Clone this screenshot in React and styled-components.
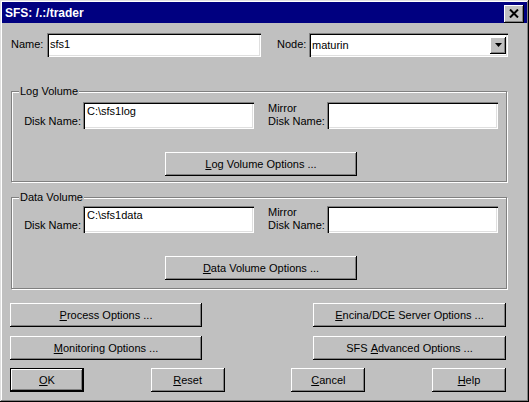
import styled, { createGlobalStyle } from "styled-components";

const GlobalStyle = createGlobalStyle`
  body {
    margin: 0;
    background: #c0c0c0;
    font-family: "Liberation Sans", Arial, sans-serif;
    font-size: 11px;
    color: #000;
  }
`;

const raised = `
  box-shadow: inset -1px -1px #000, inset 1px 1px #fff, inset -2px -2px #808080;
`;

const sunken = `
  box-shadow: inset 1px 1px #808080, inset 2px 2px #000, inset -1px -1px #fff, inset -2px -2px #dfdfdf;
`;

const Window = styled.div`
  width: 529px;
  height: 402px;
  box-sizing: border-box;
  padding: 2px;
  background: #c0c0c0;
  box-shadow: inset -1px -1px #000, inset 1px 1px #dfdfdf, inset -2px -2px #808080, inset 2px 2px #fff;
`;

const TitleBar = styled.div`
  height: 21px;
  background: #000080;
  color: #fff;
  display: flex;
  align-items: center;
  justify-content: space-between;
  padding: 0 3px 0 3px;
  font-size: 12px;
  font-weight: bold;
`;

const CloseButton = styled.div`
  width: 20px;
  height: 18px;
  background: #c0c0c0;
  ${raised}
  display: flex;
  align-items: center;
  justify-content: center;
  margin-top: 2px;
`;

const Body = styled.div`
  width: 498px;
  margin: 9px 0 0 8px;
`;

const TopRow = styled.div`
  display: grid;
  grid-template-columns: 37px 214px 16px 32px 199px;
  align-items: center;
`;

const Label = styled.span`
  padding-left: ${(p) => p.$indent || 0}px;
  line-height: 13px;
  white-space: nowrap;
`;

const Field = styled.div`
  height: ${(p) => p.$h || 24}px;
  background: #fff;
  ${sunken}
  box-sizing: border-box;
  padding: ${(p) => (p.$multi ? "3px 4px" : "0 3px")};
  display: flex;
  align-items: ${(p) => (p.$multi ? "flex-start" : "center")};
  line-height: 13px;
`;

const Select = styled(Field)`
  justify-content: space-between;
  padding-right: 2px;
  margin-top: 1px;
`;

const DropButton = styled.div`
  width: 16px;
  height: 17px;
  background: #c0c0c0;
  ${raised}
  display: flex;
  align-items: center;
  justify-content: center;
`;

const Group = styled.div`
  position: relative;
  margin: ${(p) => p.$mt}px 0 0 1px;
  width: 496px;
  box-sizing: border-box;
  border: 1px solid #808080;
  box-shadow: 1px 1px 0 #fff, inset 1px 1px 0 #fff;
  padding: ${(p) => p.$pt}px 0 ${(p) => p.$pb}px 0;
`;

const GroupTitle = styled.span`
  position: absolute;
  top: -7px;
  left: 7px;
  padding: 0 1px;
  background: #c0c0c0;
  line-height: 13px;
`;

const DiskRow = styled.div`
  display: grid;
  grid-template-columns: 70px 171px 14px 59px 171px;
  column-gap: 0;
  padding-left: 1px;
`;

const DiskLabel = styled.div`
  align-self: end;
  padding-bottom: 3px;
  padding-right: 2px;
  text-align: ${(p) => (p.$right ? "right" : "left")};
  line-height: 13px;
  white-space: nowrap;
`;

const CenterRow = styled.div`
  display: flex;
  justify-content: center;
  padding-left: 4px;
  margin-top: 21px;
`;

const Button = styled.div`
  width: ${(p) => p.$w}px;
  height: ${(p) => p.$h || 24}px;
  box-sizing: border-box;
  background: #c0c0c0;
  ${raised}
  ${(p) =>
    p.$default &&
    `border: 1px solid #000; box-shadow: inset -1px -1px #000, inset 1px 1px #fff, inset -2px -2px #808080;`}
  display: flex;
  align-items: center;
  justify-content: center;
  line-height: 13px;
  white-space: nowrap;
`;

const ButtonRow = styled.div`
  display: flex;
  justify-content: space-between;
  width: 496px;
  margin-top: ${(p) => p.$mt}px;
`;

function VolumeGroup({ title, value, option, mnemonic, mt, pt, pb }) {
  return (
    <Group $mt={mt} $pt={pt} $pb={pb}>
      <GroupTitle>{title}</GroupTitle>
      <DiskRow>
        <DiskLabel $right>Disk Name:</DiskLabel>
        <Field $h={27} $multi>{value}</Field>
        <span />
        <DiskLabel>
          Mirror
          <br />
          Disk Name:
        </DiskLabel>
        <Field $h={27} $multi />
      </DiskRow>
      <CenterRow>
        <Button $w={192}>
          <u>{mnemonic}</u>
          {option}
        </Button>
      </CenterRow>
    </Group>
  );
}

export default function App() {
  return (
    <Window>
      <GlobalStyle />
      <TitleBar>
        <span>SFS: /.:/trader</span>
        <CloseButton>
          <svg width="10" height="9" viewBox="0 0 10 9">
            <path d="M1 0.5 L9 8.5 M9 0.5 L1 8.5" stroke="#000" strokeWidth="2" />
          </svg>
        </CloseButton>
      </TitleBar>
      <Body>
        <TopRow>
          <Label $indent={1}>Name:</Label>
          <Field>sfs1</Field>
          <span />
          <Label>Node:</Label>
          <Select>
            <span>maturin</span>
            <DropButton>
              <svg width="7" height="4" viewBox="0 0 7 4">
                <path d="M0 0 H7 L3.5 4 Z" fill="#000" />
              </svg>
            </DropButton>
          </Select>
        </TopRow>
        <VolumeGroup
          title="Log Volume"
          value="C:\sfs1log"
          mnemonic="L"
          option="og Volume Options ..."
          mt={34}
          pt={10}
          pb={5}
        />
        <VolumeGroup
          title="Data Volume"
          value="C:\sfs1data"
          mnemonic="D"
          option="ata Volume Options ..."
          mt={15}
          pt={8}
          pb={8}
        />
        <ButtonRow $mt={14}>
          <Button $w={192}>
            <u>P</u>rocess Options ...
          </Button>
          <Button $w={193}>
            <u>E</u>ncina/DCE Server Options ...
          </Button>
        </ButtonRow>
        <ButtonRow $mt={9}>
          <Button $w={192}>
            <u>M</u>onitoring Options ...
          </Button>
          <Button $w={193}>
            SFS&nbsp;<u>A</u>dvanced Options ...
          </Button>
        </ButtonRow>
        <ButtonRow $mt={8}>
          <Button $w={74} $h={24} $default>
            <u>O</u>K
          </Button>
          <Button $w={74}>
            <u>R</u>eset
          </Button>
          <Button $w={74}>
            <u>C</u>ancel
          </Button>
          <Button $w={74}>
            <u>H</u>elp
          </Button>
        </ButtonRow>
      </Body>
    </Window>
  );
}
